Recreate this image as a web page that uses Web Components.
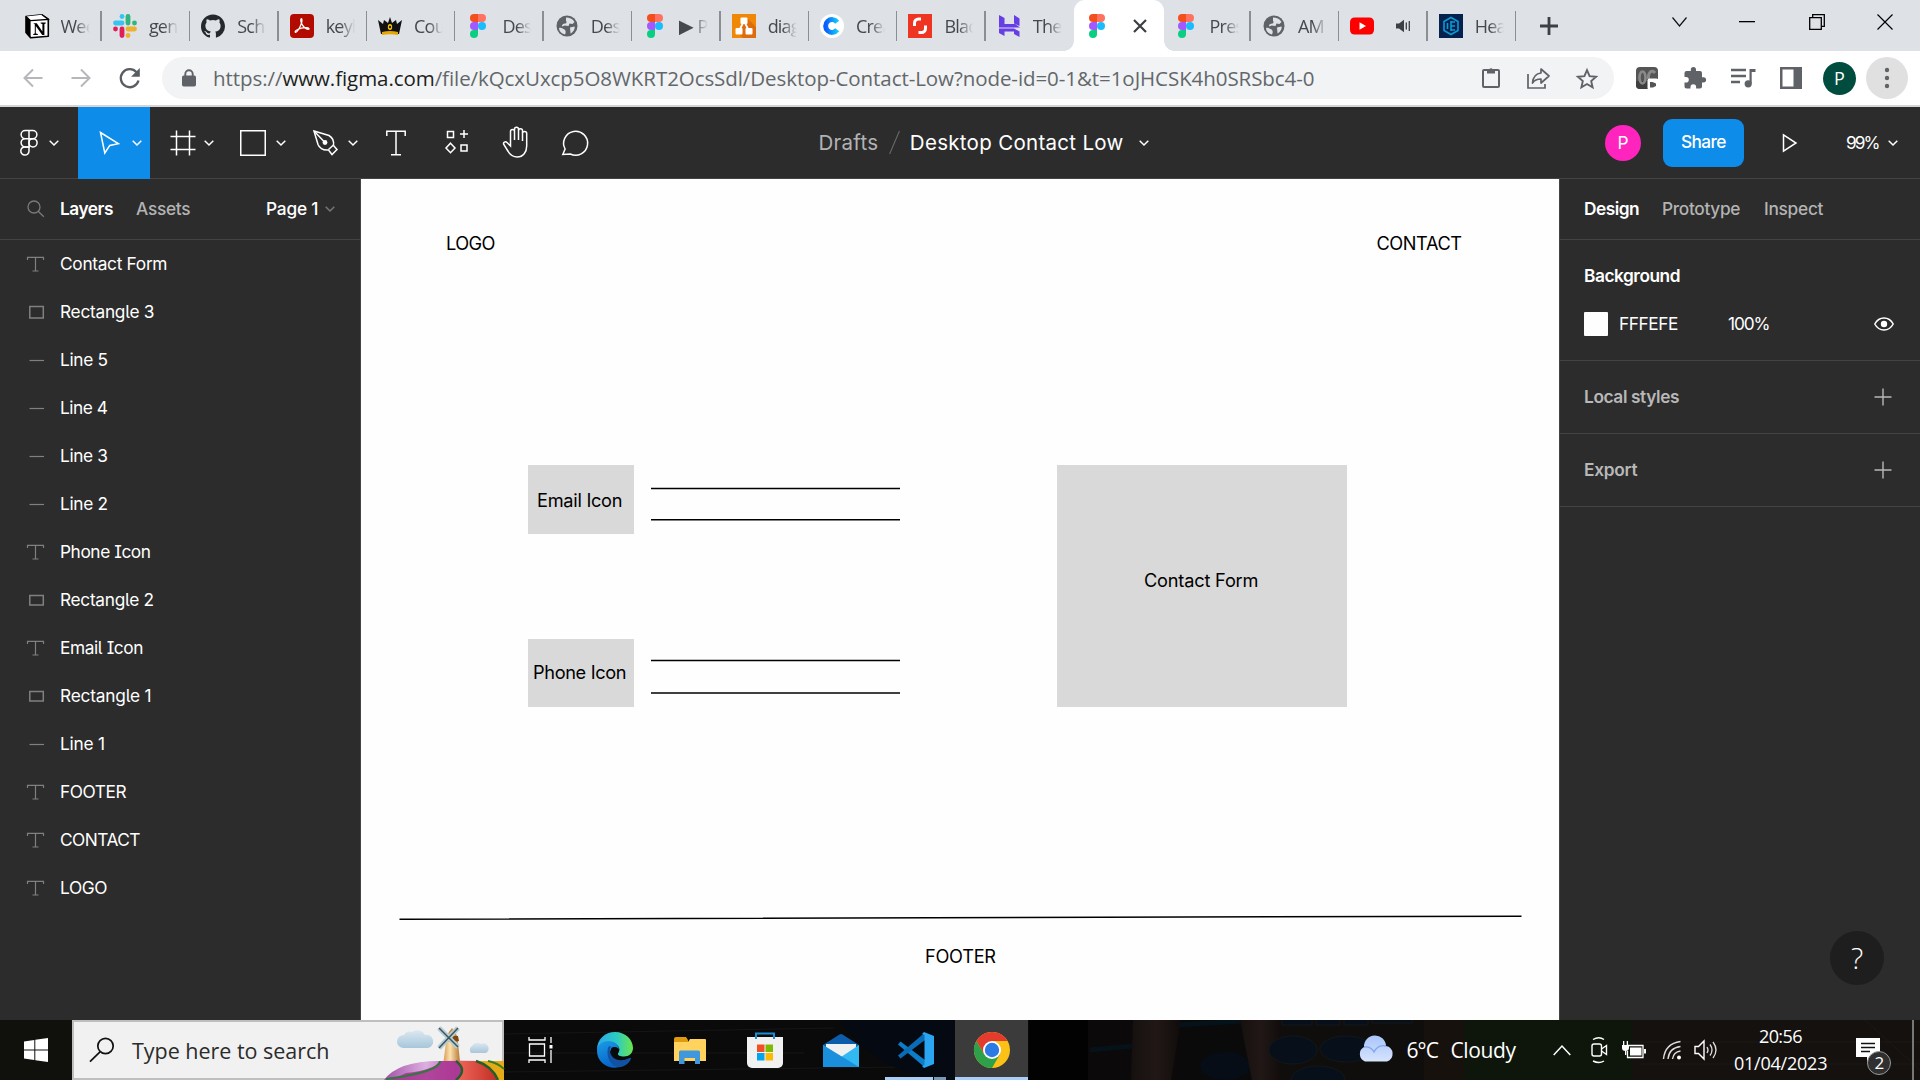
<!DOCTYPE html>
<html lang="en">
<head>
<meta charset="utf-8">
<title>Desktop Contact Low</title>
<style>
html,body{margin:0;height:100%;overflow:hidden;background:#2c2c2c}
</style>
</head>
<body>
<desk-top></desk-top>
<script>
const figmaColor = `<path d="M4 0h4v8H4a4 4 0 0 1 0-8z" fill="#f24e1e"/><path d="M8 0h4a4 4 0 0 1 0 8H8z" fill="#ff7262"/><path d="M4 8h4v8H4a4 4 0 0 1 0-8z" fill="#a259ff"/><circle cx="12" cy="12" r="4" fill="#1abcfe"/><path d="M4 16h4v4a4 4 0 1 1-4-4z" fill="#0acf83"/>`;
const ICONS = {
  notion:[24,24,`<path d="M1 2.500 17 .8l6.300 4.400v17L5.600 23.800 1 18.500z" fill="#fff" stroke="#000" stroke-width="1.600" stroke-linejoin="round"/><path d="M1 2.500l4.600 4.200 17.700-1.300L17 .8" stroke="#000" stroke-width="1.200" fill="#fff"/><path d="M1 2.500l4.600 4.200v17L1 18.500z" fill="#000"/><path d="M8.200 9.200h3.600l5.600 8.200V10l-1.700-.5v-.9h5v.9l-1.300.5v11h-2.200l-6.400-9v7.500l2 .5v1H8.300v-1l1.500-.5V10.200z" fill="#000"/>`],
  slack:[24,24,`<g stroke-width="4.800" stroke-linecap="round"><path d="M9 2.500h0" stroke="#36c5f0"/><path d="M2.500 9H9" stroke="#36c5f0"/><path d="M15 2.500V9" stroke="#2eb67d"/><path d="M21.500 9h0" stroke="#2eb67d"/><path d="M15 15h6.500" stroke="#ecb22e"/><path d="M15 21.500h0" stroke="#ecb22e"/><path d="M9 15v6.500" stroke="#e01e5a"/><path d="M2.500 15h0" stroke="#e01e5a"/></g>`],
  github:[24,24,`<path d="M12 .5C5.400.5 0 5.800 0 12.400c0 5.200 3.400 9.600 8.200 11.200.6.1.8-.3.8-.6v-2.200c-3.300.7-4-1.400-4-1.400-.5-1.400-1.300-1.800-1.300-1.800-1.100-.7.1-.7.1-.7 1.200.1 1.800 1.200 1.800 1.200 1.100 1.800 2.800 1.300 3.500 1 .1-.8.4-1.300.8-1.600-2.700-.3-5.500-1.300-5.500-5.900 0-1.300.5-2.400 1.200-3.200-.1-.3-.5-1.500.1-3.200 0 0 1-.3 3.300 1.200a11.500 11.500 0 0 1 6 0C17.300 5 18.300 5.300 18.300 5.300c.6 1.700.2 2.900.1 3.200.8.800 1.200 1.900 1.200 3.200 0 4.600-2.800 5.600-5.500 5.900.4.4.8 1.100.8 2.200V23c0 .3.2.7.8.6A12 12 0 0 0 24 12.400C24 5.800 18.600.5 12 .5z" fill="#24292f"/>`],
  acrobat:[24,24,`<rect width="24" height="24" rx="4" fill="#b30b00"/><path d="M5.500 18.300c1.500.5 5-5.500 6.100-9.600.5-2 .5-4-.2-4s-1 2 .2 4.700c1.300 3 4.300 6 6.500 6 1.700 0 1-1.600-1.500-1.700-3.500-.2-7 .8-9.400 2.100-1.600.9-2.500 2.100-1.700 2.500z" fill="none" stroke="#fff" stroke-width="1.300"/>`],
  crown:[24,24,`<path d="M0 6l5 4 1-4 4 3 2-6 2 6 4-3 1 4 5-4-3 14H3z" fill="#111"/><path d="M4 18q8-2 16 0v3q-8-1.500-16 0z" fill="#e6a800"/><ellipse cx="12" cy="13" rx="2.200" ry="3" fill="#ffc400"/><circle cx="12" cy="13" r="1.200" fill="#222"/>`],
  figma:[16,24,figmaColor],
  globe:[22,22,`<circle cx="11" cy="11" r="10.500" fill="#5f6368"/><path d="M3 13c2-1 4 .5 5.500 1.500S10 18 9 19.500C5 18.500 3 16 3 13zM10 2.500c3.500 0 6.500 1 8.500 4.500l-2 2-3-.5-1 2.500-4-.5-2 1C5 10 7.500 8.500 9.500 8.500c1 0 1.500-2 .5-2.500zM14 12.500l4.500-1c1 2-1.500 6-4 7 0-2-.5-4-.5-6z" fill="#dee1e6"/>`],
  diagrams:[24,24,`<path d="M0 0h24v24H0z" fill="#f08705"/><path d="M15 4l9 9v11H11l-6-6z" fill="#df6c0c"/><path d="M12 7L7 17M12 7l5 10" stroke="#fff" stroke-width="1.800"/><rect x="8.500" y="3.500" width="7" height="6.500" rx="1" fill="#fff"/><rect x="3.500" y="14" width="7" height="6.500" rx="1" fill="#fff"/><rect x="13.500" y="14" width="7" height="6.500" rx="1" fill="#fff"/>`],
  cre:[24,24,`<circle cx="12" cy="12" r="12" fill="#fff"/><path d="M17.200 8.200A6.400 6.400 0 1 0 17.200 15.800" fill="none" stroke="url(#cg)" stroke-width="5"/><defs><linearGradient id="cg"><stop stop-color="#0a5cff"/><stop offset="1" stop-color="#12c8f4"/></linearGradient></defs>`],
  black:[24,24,`<path d="M0 0h24v24H0z" fill="#ee3524"/><path d="M6.500 12V9a4 4 0 0 1 4-4H13M17.500 11.500v3a4 4 0 0 1-4 4H10.500" fill="none" stroke="#fff" stroke-width="3"/>`],
  hostinger:[22,24,`<path d="M1 1l5.500 3v6H17l5 3.500H1zM16 1l5.500 3.500V12L16 9.500zM1 14.500h15l5.500 3V23L16 20v-2.500H6.500V22L1 19z" fill="#673de6"/>`],
  x:[14,14,`<path d="M1 1l12 12M13 1L1 13" stroke="#3c4043" stroke-width="2.200"/>`],
  youtube:[24,18,`<rect width="24" height="17" y=".5" rx="4.500" fill="#f00"/><path d="M9.500 5.200v7.600L16 9z" fill="#fff"/>`],
  sound:[15,14,`<path d="M0 4.500h3L8 .8v12.400L3 9.500H0z" fill="#3c4043"/><path d="M10.300 3.500v7M13.300 2v10" stroke="#3c4043" stroke-width="1.300"/>`],
  health:[24,24,`<path d="M0 0h24v24H0z" fill="#05224f"/><path d="M12 3.500l7 4v9l-7 4-7-4v-9zM12 7v10M12.500 8H16M12.500 12H16M12.500 16H16M8.500 9v6" fill="none" stroke="#0a9ad4" stroke-width="1.600"/>`],
  plusTab:[18,18,`<path d="M9 0v18M0 9h18" stroke="#3c4043" stroke-width="2.800"/>`],
  winDown:[15,10,`<path d="M.5.500l7 8.500 7-8.500" fill="none" stroke="#111" stroke-width="1.200"/>`],
  winMin:[16,2,`<path d="M0 0h16v1.300H0z" fill="#000"/>`],
  winMax:[16,16,`<path d="M.7 3.700h11.600v11.600H.7zM3.700 3.500V.7h11.600v11.600H12.500" fill="none" stroke="#000" stroke-width="1.300"/>`],
  winClose:[16,16,`<path d="M.5.500l15 15M15.500.500l-15 15" stroke="#000" stroke-width="1.200"/>`],
  back:[20,20,`<path d="M19.500 10H2M10 1.500L1.500 10l8.500 8.500" fill="none" stroke="#b5b7ba" stroke-width="2"/>`],
  fwd:[20,20,`<path d="M.5 10H18M10 1.500l8.500 8.500-8.500 8.500" fill="none" stroke="#b5b7ba" stroke-width="2"/>`],
  reload:[22,22,`<path d="M17.500 5.200a9 9 0 1 0 2 8.300" fill="none" stroke="#5a5e63" stroke-width="2.300"/><path d="M20.800 1v8.700h-8.700z" fill="#5a5e63"/>`],
  lock:[14,18,`<path d="M3.300 8V5a3.700 3.700 0 0 1 7.400 0v3" fill="none" stroke="#5f6368" stroke-width="1.900"/><rect y="6.500" width="14" height="11" rx="1.700" fill="#5f6368"/>`],
  clip:[18,22,`<rect x="1" y="3" width="16" height="17" rx="1" fill="none" stroke="#5f6368" stroke-width="2"/><path d="M5 2.500h2.300a1.800 1.800 0 0 1 3.400 0H13v4H5z" fill="#5f6368"/>`],
  share:[24,22,`<path d="M1 7v14h17v-4" fill="none" stroke="#5f6368" stroke-width="1.700"/><path d="M14 2l8 7-8 7v-4c-4 0-6.500 1-8.500 4C6 10.500 9 6.500 14 6z" fill="none" stroke="#5f6368" stroke-width="1.700" stroke-linejoin="round"/>`],
  star:[22,21,`<path d="M11 2.200l2.600 6 6.500.6-4.900 4.300 1.400 6.300L11 16l-5.600 3.400 1.400-6.300L1.900 8.800l6.500-.6z" fill="none" stroke="#5f6368" stroke-width="1.900"/>`],
  ext:[23,23,`<rect x="0" y="0" width="22" height="22" rx="4" fill="#555"/><path d="M0 14h22v4a4 4 0 0 1-4 4H4a4 4 0 0 1-4-4z" fill="#3f3f3f"/><ellipse cx="6.500" cy="10.500" rx="3" ry="6" fill="none" stroke="#8a8a8a" stroke-width="2.600"/><path d="M19 6c-3-4-7-1-6.500 6" fill="none" stroke="#8a8a8a" stroke-width="3"/><rect x="11.500" y="11.500" width="11" height="11.500" rx="2" fill="#fff"/><path d="M14 15h2.500l3.500 1.500V19l-3 1.500h-3z" fill="#555"/>`],
  puzzle:[22,22,`<path d="M19.500 10.200H18V6a2 2 0 0 0-2-2h-4V2.600a2.600 2.600 0 0 0-5.200 0V4H2.500a2 2 0 0 0-2 2v3.900H2a2.800 2.800 0 0 1 0 5.600H.5v4a2 2 0 0 0 2 2h4V20a2.800 2.800 0 0 1 5.600 0v1.500H16a2 2 0 0 0 2-2v-4.100h1.500a2.600 2.600 0 0 0 0-5.200z" fill="#5f6368"/>`],
  queue:[25,20,`<path d="M0 2h15M0 8h15M0 14h9" stroke="#5f6368" stroke-width="2.400"/><path d="M18.500 15V1h6v3h-3.800v11.500" fill="#5f6368"/><circle cx="17.200" cy="15.800" r="3.600" fill="#5f6368"/>`],
  side:[22,22,`<path d="M0 0h22v22H0zM2.500 2.500v17h11v-17z" fill="#5f6368" fill-rule="evenodd"/>`],
  dots:[6,22,`<circle cx="3" cy="3" r="2.200" fill="#5f6368"/><circle cx="3" cy="11" r="2.200" fill="#5f6368"/><circle cx="3" cy="19" r="2.200" fill="#5f6368"/>`],
  caret:[10,8,`<path d="M.7 1.700L5 6l4.300-4.300" fill="none" stroke="currentColor" stroke-width="1.500"/>`],
  figmaLine:[18,28,`<g fill="none" stroke="#fff" stroke-width="1.500" transform="translate(0 .5)"><path d="M9 1H5.200a4.100 4.100 0 0 0 0 8.200H9zM9 1h3.800a4.100 4.100 0 0 1 0 8.200H9zM9 9.200H5.200a4.100 4.100 0 0 0 0 8.200H9z"/><circle cx="13" cy="13.300" r="4.100"/><path d="M9 17.400H5.200A4.100 4.100 0 1 0 9 21.500z"/></g>`],
  cursor:[21,24,`<path d="M1.500 1.500l17.800 11.200-8.500 1.700L5.800 22z" fill="none" stroke="#fff" stroke-width="1.500"/>`],
  frame:[26,26,`<path d="M6.500.500v25M19.500.500v25M.5 6.500h25M.5 19.500h25" stroke="#fff" stroke-width="1.500"/>`],
  square:[26,26,`<rect x=".75" y=".75" width="24.500" height="24.500" fill="none" stroke="#fff" stroke-width="1.500"/>`],
  pen:[26,26,`<g fill="none" stroke="#fff" stroke-width="1.500"><path d="M1 1l15 4.500c3.500 2 5 6 4.500 10l3.500 4-5 5-3.500-4.500C10 20.500 6.500 18 5 14.500z"/><path d="M1.500 1.500l9.500 10"/><path d="M15.500 19.500l5-4.500"/></g><circle cx="12" cy="12.500" r="2.400" fill="#fff"/>`],
  text:[20,26,`<path d="M.8 6V1.300h18.400V6M10 1.300v23.400M5 24.700h10" fill="none" stroke="#fff" stroke-width="1.500"/>`],
  res:[24,28,`<g fill="none" stroke="#fff" stroke-width="1.500"><path d="M2.500 2.500h6v6h-6zM16 16h6v6h-6zM19 1v8M15 5h8"/><path d="M5.500 14.200L10 19l-4.500 4.700L1 19z"/></g>`],
  hand:[28,34,`<path d="M8.500 17V5.500a2 2 0 0 1 4 0V14M12.500 13V3.200a2 2 0 0 1 4 0V14M16.500 13V4.800a2 2 0 0 1 4 0V15M20.500 13V7.500a2.100 2.100 0 0 1 4.200 0V20c0 6-3.500 11-9.500 11-4.500 0-7-2-9-5.500L1.800 18.500c-1-2 1.600-3.500 3.200-2L8.500 20v-4" fill="none" stroke="#fff" stroke-width="1.500"/>`],
  comment:[28,31,`<path d="M1.500 26l2.300-5.500A12 12 0 1 1 9 25.500z" transform="translate(.3 .5)" fill="none" stroke="#fff" stroke-width="1.500"/>`],
  play:[16,20,`<path d="M1.500 1.800v16.400L14 10z" fill="none" stroke="#fff" stroke-width="1.500"/>`],
  find:[18,18,`<circle cx="7" cy="7" r="6" fill="none" stroke="#7a7a7a" stroke-width="1.300"/><path d="M11.200 11.200l5.600 5.600" stroke="#7a7a7a" stroke-width="1.300"/>`],
  lT:[18,16,`<path d="M.5 4V1.300h16V4M8.500 1v14M5.500 15h6" fill="none" stroke="#808080" stroke-width="1.200"/>`],
  lR3:[18,16,`<rect x="2.800" y="2.500" width="13.500" height="11.500" fill="none" stroke="#808080" stroke-width="1.500"/>`],
  lR:[18,16,`<rect x="2.800" y="3.500" width="13.500" height="9.500" fill="none" stroke="#808080" stroke-width="1.500"/>`],
  lL:[18,16,`<path d="M2.500 8.500h14.500" stroke="#808080" stroke-width="1.200"/>`],
  eye:[20,14,`<path d="M.8 7C3 2.900 6.500 1 10 1s7 1.900 9.200 6C17 11.100 13.500 13 10 13S3 11.100.8 7z" fill="none" stroke="#fff" stroke-width="1.500"/><circle cx="10" cy="7" r="3.200" fill="#fff"/>`],
  plus:[18,18,`<path d="M9 .5v17M.5 9h17" stroke="#b8b8b8" stroke-width="1.400"/>`],
  windows:[24,24,`<path d="M0 3.500L10.300 2v9.500H0zM11.300 1.800L24 0v11.500H11.300zM0 12.500h10.300V22L0 20.600zM11.300 12.500H24V24l-12.700-1.800z" fill="#fff"/>`],
  search:[26,26,`<circle cx="16.500" cy="9" r="7.700" fill="none" stroke="#111" stroke-width="1.700"/><path d="M11 14.800L1 24.700" stroke="#111" stroke-width="1.700"/>`],
  mill:[120,60,`<defs><linearGradient id="cl" x2="0" y2="1"><stop stop-color="#dbe8f1"/><stop offset="1" stop-color="#a8c6da"/></linearGradient><linearGradient id="tw"><stop stop-color="#d99a50"/><stop offset=".4" stop-color="#fbe2b0"/><stop offset="1" stop-color="#b87834"/></linearGradient><linearGradient id="pu"><stop stop-color="#a44fa8"/><stop offset=".35" stop-color="#dcb0e0"/><stop offset=".6" stop-color="#b95fb4"/></linearGradient><linearGradient id="rd"><stop stop-color="#f2685c"/><stop offset="1" stop-color="#b9251b"/></linearGradient></defs>
    <path d="M19 28a6.500 6.500 0 0 1 1-13 7 7 0 0 1 8-3 9 9 0 0 1 13 3 6.500 6.500 0 0 1 3 13z" fill="url(#cl)"/><path d="M87 33a4.500 4.500 0 0 1 1-7 6 6 0 0 1 9-2 4.800 4.800 0 0 1 5 9z" fill="url(#cl)"/>
    <path d="M59.500 42l2.500-20 3-4h6l3 4 2 20z" fill="url(#tw)"/><path d="M63 17q1-5 5-9 5 7 6 10v4H63z" fill="#c98a3c"/><path d="M66 16h8l1 5-6 1z" fill="#80480f"/><path d="M55 8l19 19M74 8L55 28" stroke="#b8cdd2" stroke-width="5"/><path d="M55 8l19 19M74 8L55 28" stroke="#3a5560" stroke-width="1.500"/>
    <path d="M0 60Q14 41 55 41q34-1 65 1v18z" fill="url(#pu)"/><path d="M22 53q28-3 34-12h17q8 9 1 19H5q10-3 17-7z" fill="#a9328f" opacity=".85"/><path d="M2 59q54-7 54-18" fill="none" stroke="#2c7a3e" stroke-width="2.200"/><path d="M72 41q10 8 0 19h48V41z" fill="url(#rd)"/><path d="M92 41q17 5 22 19h6V41z" fill="#e7aa16"/><path d="M72 41q12 9 0 19M92 41q16 5 22 19" fill="none" stroke="#245f2b" stroke-width="2.500"/><path d="M104 41q10 2 16 8" stroke="#3b7d25" stroke-width="2" fill="none"/>`],
  task:[26,26,`<path d="M1 0v3h16V0M1 26v-3h16v3M1.500 7h15v12h-15zM23 0v6M23 13v13" fill="none" stroke="#fff" stroke-width="1.300"/><path d="M21.500 8h3v3.500h-3z" fill="#fff"/>`],
  edge:[36,36,`<defs><linearGradient id="e1"><stop stop-color="#2ba9ea"/><stop offset=".55" stop-color="#2ccbc4"/><stop offset="1" stop-color="#6ce64a"/></linearGradient><linearGradient id="e2" x2=".4" y2="1"><stop stop-color="#1b9de8"/><stop offset="1" stop-color="#0864c8"/></linearGradient></defs><path d="M0 18C0 7 8 0 18 0c11 0 18 8 18 16 0 5-4 8.500-9 8.500-4 0-6.500-1.300-6-3 3-4 1-9-4-9C9 12.500 2 14 0 18z" fill="url(#e1)"/><path d="M0 18c1-6 6-9 11.500-9C18 9 22 13 22 17c-3-3-8-2-9 3-1 7 4 16 12 14.300C14 39-.5 32 0 18z" fill="url(#e2)"/><path d="M11.500 14.500C8 24 14 36 24 35c5-1 9-5 10-8.500.2-1-1-1-2-.3-8 4-17 2-19-6.200-.4-2 0-4 1.500-5.500z" fill="#1152a2"/><path d="M14 17c1.500-3 6.500-2.500 7.300 1 .4 2-.8 3-.8 4.500-3 1.500-6-1-6.500-5.500z" fill="#07090d"/>`],
  folder:[32,27,`<path d="M0 2a2 2 0 0 1 2-2h10l2 3v3H0z" fill="#e09a10"/><path d="M0 5h14l2-3h15a1 1 0 0 1 1 1v21H0z" fill="#ffd35e"/><path d="M5 27V15a1.500 1.500 0 0 1 1.500-1.500h18A1.500 1.500 0 0 1 26 15v12h-5v-6H10.500v6z" fill="#3f98dc"/>`],
  store:[36,36,`<path d="M9 8V1.500h18V8" fill="none" stroke="#1c8fd2" stroke-width="2"/><path d="M0 5h36v26a5 5 0 0 1-5 5H5a5 5 0 0 1-5-5z" fill="#f1f1f1"/><path d="M9 5v2M27 5v2" fill="none" stroke="#1c8fd2" stroke-width="2"/><path d="M10 12.500h7.500V20H10z" fill="#f25022"/><path d="M18.500 12.500H26V20h-7.500z" fill="#7fba00"/><path d="M10 21h7.500v7.500H10z" fill="#00a4ef"/><path d="M18.500 21H26v7.500h-7.500z" fill="#ffb900"/>`],
  mail:[36,33,`<path d="M0 11L16.500.5q1.500-1 3 0L36 11v6H0z" fill="#0d5cab"/><path d="M3 10h30v13H3z" fill="#eef0f2"/><path d="M0 11l18 12L36 11v22H0z" fill="#32b9f2"/><path d="M0 11l36 22H0z" fill="#1a90dd"/>`],
  code:[36,36,`<path d="M0 12.500l2.500-3L27 28v7.500z" fill="#0c7dc8"/><path d="M0 23.500l2.500 3L27 8V.5z" fill="#0a6cb6"/><path d="M26 0l10 4v28l-10 4-2-2 2.500-1V3L24 2z" fill="#2aa5f2"/>`],
  chrome:[36,36,`<circle cx="18" cy="18" r="18" fill="#fbc116"/><path d="M18 9h15.600A18 18 0 0 0 2.400 9l7.800 13.500z" fill="#e33b2e"/><path d="M2.400 9A18 18 0 0 0 18 36l7.800-13.500L10.200 22.500z" fill="#2da04a"/><circle cx="18" cy="18" r="9" fill="#fff"/><circle cx="18" cy="18" r="7.200" fill="#2c7be5"/>`],
  cloud:[38,24,`<defs><linearGradient id="wc" x2="0" y2="1"><stop stop-color="#a9c5fb"/><stop offset="1" stop-color="#d6e4fd"/></linearGradient></defs><path d="M8 23.500A8 8 0 0 1 7 9a11 11 0 0 1 22-1 8 8 0 0 1 1 15.500z" fill="url(#wc)"/><path d="M7 9q7-1 10 5 4-8 12-6" fill="none" stroke="#7fa5ee" stroke-width="1.300"/>`],
  up:[18,11,`<path d="M.7 10L9 1l8.300 9" fill="none" stroke="#fff" stroke-width="1.500"/>`],
  meet:[18,26,`<g fill="none" stroke="#fff" stroke-width="1.400"><rect x="2" y="7" width="9.500" height="12" rx="2"/><path d="M11.500 12l5-3.500v9l-5-3.500M3 2.500q6-3.500 11 0M3 24q6 3 11 0"/></g>`],
  battery:[24,18,`<path d="M6 4.500h15v12H5.500V10" fill="none" stroke="#fff" stroke-width="1.300"/><path d="M8 6.500h11.500v8H8zM22 8h2v4.500h-2zM0 4h7v3q0 3-3.500 3T0 7zM1 0h1.300v4H1zM4.700 0H6v4H4.700zM3 10h1.300v4H3z" fill="#fff"/>`],
  wifi:[20,20,`<g fill="none" stroke="#ddd" stroke-width="1.400"><path d="M1.500 19Q3 3.500 18.500 1.500M6 19Q7 8 18.500 6.500M10.500 19q1-7 8-8"/></g><circle cx="17" cy="17.500" r="2" fill="#fff"/>`],
  volume:[23,20,`<path d="M1 6.500h3.500L10 1v18l-5.500-5.500H1z" fill="none" stroke="#fff" stroke-width="1.400"/><path d="M13 7q2 3 0 6M16 4.500q4 5.500 0 11M19 2q6 8 0 16" fill="none" stroke="#ddd" stroke-width="1.300"/>`],
  note:[24,25,`<path d="M0 0h24v19h-8l-5 5.500V19H0z" fill="#fff"/><path d="M5 5.500h14M5 9.500h14M5 13.500h9" stroke="#111" stroke-width="1.300"/>`]
};

function define(tag, html, setup){
  customElements.define(tag, class extends HTMLElement{
    connectedCallback(){
      if(this.shadowRoot) return;
      const root=this.attachShadow({mode:'open'});
      const t=document.createElement('template');
      t.innerHTML=typeof html==='function'?html(this):html;
      root.append(t.content.cloneNode(true));
      if(setup) setup(this,root);
    }
  });
}
const icon=(n,style='')=>`<ui-icon name="${n}" style="${style}"></ui-icon>`;
const fit=(w,t,style='')=>`<fit-text w="${w}" style="${style}">${t}</fit-text>`;

/* Root: browser tabs, address bar, editor, taskbar */
define('desk-top',`<style>:host{display:flex;flex-direction:column;width:1920px;height:1080px;overflow:hidden}</style>
<tab-strip></tab-strip><address-bar></address-bar><editor-toolbar></editor-toolbar><editor-body></editor-body><task-bar></task-bar>`);

define('tab-strip',()=>{
  const tabs=[['notion','Weekly'],['slack','general'],['github','School'],['acrobat','keyboard'],['crown','Courses'],['figma','Design'],['globe','Design'],['figma','<b>▶</b> Portfolio'],['diagrams','diagram'],['cre','Create'],['black','Black'],['hostinger','The best'],['figma',null],['figma','Present'],['globe','AM I'],['youtube','@'],['health','Health']];
  return `<style>:host{display:flex;height:51px;flex:none;background:#dee1e6;padding-left:13.500px;align-items:center}</style>`+
  tabs.map(([i,t])=>`<browser-tab icon="${i}" ${t===null?'active':''} ${t==='@'?'audio':''}>${t&&t!='@'?t:''}</browser-tab>`).join('')+
  icon('plusTab','margin-left:23.500px')+icon('winDown','margin:-8px 0 0 114px')+icon('winMin','margin:-8px 0 0 52px')+icon('winMax','margin:-8px 0 0 54px')+icon('winClose','margin:-8px 0 0 52px');
});
define('browser-tab',el=>`<style>
:host{display:flex;box-sizing:border-box;width:88.400px;height:51px;align-items:center;flex:none;font:18px/26px "Open Sans","Noto Sans",sans-serif;color:#45484c;position:relative}
.i{width:24px;margin-left:11px;display:flex;justify-content:center;flex:none}
.t{width:29px;height:26px;margin-left:12px;overflow:hidden;white-space:nowrap;letter-spacing:-.8px;-webkit-mask-image:linear-gradient(90deg,#000 50%,transparent);mask-image:linear-gradient(90deg,#000 50%,transparent)}
.sep{width:1.500px;height:30px;background:#8b8e92;margin-left:auto}
:host([active]){background:#fff;border-radius:11px 11px 0 0;width:90px;margin-right:-1.600px}
:host([active])::before,:host([active])::after{content:"";position:absolute;bottom:0;width:10px;height:10px}
:host([active])::before{left:-10px;background:radial-gradient(circle at 0 0,transparent 9.500px,#fff 10px)}
:host([active])::after{right:-10px;background:radial-gradient(circle at 100% 0,transparent 9.500px,#fff 10px)}
::slotted(b){font-family:"DejaVu Sans";font-size:20px;line-height:20px;letter-spacing:0;font-weight:400;margin-left:-1px}
</style><span class="i">${icon(el.getAttribute('icon'))}</span>`+
(el.hasAttribute('active')?icon('x','margin-left:23.500px'):el.hasAttribute('audio')?icon('sound','margin-left:22px')+'<span class="sep"></span>':`<span class="t"><slot></slot></span>${el.getAttribute('icon')==='hostinger'?'':'<span class="sep"></span>'}`));

define('address-bar',`<style>
:host{display:flex;box-sizing:border-box;height:56px;flex:none;background:#fff;border-bottom:2px solid #d4d5d6;align-items:center;padding-left:23px;font:20.500px/28px "Open Sans","Noto Sans",sans-serif;color:#63676b}
.url{display:flex;align-items:center;width:1452px;height:42px;border-radius:21px;background:#f1f3f4;margin-left:21px;flex:none}
b{font-weight:400;color:#1d1e20}
.p{width:33px;height:33px;border-radius:50%;background:#004d40;color:#fff;font-size:18px;text-align:center;line-height:33px;margin-left:21px}
.m{width:42px;height:42px;border-radius:50%;background:#e0e0e1;display:flex;align-items:center;justify-content:center;margin-left:10px}
</style>${icon('back')}${icon('fwd','margin-left:28px')}${icon('reload','margin-left:28px')}
<div class="url">${icon('lock','margin-left:20px')}${fit(1103,'https://<b>www.figma.com</b>/file/kQcxUxcp5O8WKRT2OcsSdl/Desktop-Contact-Low?node-id=0-1&amp;t=1oJHCSK4h0SRSbc4-0','margin-left:16px')}${icon('clip','margin-left:167px')}${icon('share','margin-left:27px')}${icon('star','margin-left:25px')}</div>
${icon('ext','margin-left:22px')}${icon('puzzle','margin-left:25px')}${icon('queue','margin-left:25px')}${icon('side','margin-left:24px')}<div class="p">P</div><div class="m">${icon('dots')}</div>`);

define('tool-button',el=>{const g=a=>el.getAttribute(a);return `<style>:host{display:flex;align-items:center;box-sizing:border-box;height:72px;flex:none;color:#fff;width:${g('w')}px;padding-left:${g('pad')}px}:host([on]){background:#0d8ce9}</style>${icon(g('icon'))}${g('gap')?icon('caret',`margin-left:${g('gap')}px`):''}`});

define('editor-toolbar',`<style>
:host{display:flex;height:71px;flex:none;background:#2c2c2c;border-bottom:1px solid #444;color:#fff;font:17.300px/24px Inter,sans-serif}
.tools{display:flex;width:817.500px;height:72px}.title{display:flex;align-items:center;width:787.500px;font-size:20.500px}
.slash{width:1.300px;height:25px;background:#6b6b6b;transform:rotate(23deg);margin:0 14px 0 15px}
.r{display:flex;align-items:center}.p{width:36px;height:36px;border-radius:50%;background:#ff24bd;text-align:center;line-height:36px}
.s{display:flex;align-items:center;justify-content:center;box-sizing:border-box;width:81px;height:48px;border-radius:9px;background:#0d8ce9;margin-left:22px;font-weight:500;padding-bottom:1px}
</style><div class="tools">
<tool-button icon="figmaLine" w="78" pad="20" gap="11"></tool-button><tool-button on icon="cursor" w="72" pad="21" gap="12"></tool-button><tool-button icon="frame" w="72" pad="20" gap="8"></tool-button><tool-button icon="square" w="72" pad="18" gap="10"></tool-button><tool-button icon="pen" w="72" pad="19" gap="9"></tool-button><tool-button icon="text" w="61" pad="20"></tool-button><tool-button icon="res" w="60" pad="18"></tool-button><tool-button icon="hand" w="59" pad="15"></tool-button><tool-button icon="comment" w="60" pad="15"></tool-button></div>
<div class="title">${fit(61,'Drafts','color:#b3b3b3')}<span class="slash"></span>${fit(215,'Desktop Contact Low')}${icon('caret','margin-left:15.500px')}</div>
<div class="r"><div class="p">P</div><div class="s">${fit(47,'Share')}</div>${icon('play','margin-left:38px')}${fit(36,'99%','margin-left:47px')}${icon('caret','margin-left:7px')}</div>`);

define('editor-body',`<style>:host{display:flex;flex:1;min-height:0;font:17.300px/24px Inter,sans-serif;color:#fff}</style><layers-panel></layers-panel><design-canvas></design-canvas><design-panel></design-panel>`);

define('layer-row',el=>`<style>:host{display:flex;align-items:center;height:48px;padding-left:27px;font-feature-settings:"cv05","cv08"}</style>${icon(el.getAttribute('icon'))}${fit(el.getAttribute('w'),el.getAttribute('label'),'margin-left:14px')}`);
define('layers-panel',`<style>
:host{display:block;width:360px;flex:none;background:#2c2c2c;border-right:1px solid #444}
.h{display:flex;align-items:center;height:60px;border-bottom:1px solid #444;padding-left:27px}
</style><div class="h">${icon('find')}${fit(55,'Layers','margin-left:14px;font-weight:600')}${fit(56,'Assets','margin-left:21px;font-weight:500;color:#b3b3b3')}${fit(54,'Page 1','margin-left:74px;font-weight:500')}${icon('caret','margin-left:6px;color:#777')}</div>`+
[['lT','Contact Form',109],['lR3','Rectangle 3',96],['lL','Line 5',49.5],['lL','Line 4',49.5],['lL','Line 3',49.5],['lL','Line 2',49.5],['lT','Phone Icon',92.5],['lR','Rectangle 2',95.5],['lT','Email Icon',85],['lR','Rectangle 1',93],['lL','Line 1',46.5],['lT','FOOTER',68],['lT','CONTACT',82],['lT','LOGO',49]].map(([i,t,w])=>`<layer-row icon="${i}" label="${t}" w="${w}"></layer-row>`).join(''));

/* Free canvas: coordinates are relative to the artboard's corner */
define('design-canvas',`<style>
:host{display:block;position:relative;width:1198px;flex:none;background:#fffefe;color:#000;overflow:hidden;font:18.200px/26px Inter,sans-serif}
fit-text,.box{position:absolute}.box{background:#d9d9d9}svg{position:absolute;inset:0}
</style>
<div class="box" style="left:167px;top:286px;width:105.500px;height:68.500px"></div>
<div class="box" style="left:167px;top:459.500px;width:105.500px;height:68px"></div>
<div class="box" style="left:696px;top:286px;width:290px;height:241.500px"></div>
<svg width="1198" height="841"><path d="M290 309.500h249M290 340.700h249M290 481.500h249M290 514h249M38.500 740.200L1160.500 737.200" stroke="#000" stroke-width="1.500"/></svg>`+
[['LOGO',84,51,51],['CONTACT',1014.5,87,51],['Email Icon',175,87,308],['Phone Icon',171,95,480],['Contact Form',782,116,388],['FOOTER',563,72.500,764]].map(([t,x,w,y])=>fit(w,t,`left:${x}px;top:${y}px`)).join(''));

define('panel-row',`<style>:host{display:flex;box-sizing:border-box;align-items:center;height:73px;padding:0 28px 0 23px;border-bottom:1px solid #444;justify-content:space-between;color:#b8b8b8;font-weight:600}</style><slot></slot>${icon('plus')}`);
define('design-panel',`<style>
:host{display:block;position:relative;box-sizing:border-box;flex:1;background:#2c2c2c;border-left:1px solid #444}
.h,.row{display:flex;align-items:center}.h{height:60px;border-bottom:1px solid #444;padding-left:23px;font-weight:500;color:#b3b3b3}
.bg{box-sizing:border-box;height:121px;border-bottom:1px solid #444;padding:24px 25px 0 23px}
.row{height:48px;margin-top:12px}.sw{width:24px;height:24px;background:#fffefe;border-radius:1px;margin-left:1px}
.q{position:absolute;right:36px;bottom:35px;width:54px;height:54px;border-radius:50%;background:#1e1e1e;text-align:center;font:300 29px/54px "Open Sans",sans-serif}
</style><div class="h">${fit(57,'Design','color:#fff;font-weight:600')}${fit(80,'Prototype','margin-left:21px')}${fit(61,'Inspect','margin-left:22px')}</div>
<div class="bg">${fit(98,'Background','font-weight:600')}<div class="row"><span class="sw"></span>${fit(61,'FFFEFE','margin-left:10px')}${fit(44,'100%','margin-left:48px')}${icon('eye','margin-left:auto;margin-right:1px')}</div></div>
<panel-row>${fit(97,'Local styles')}</panel-row><panel-row>${fit(55,'Export')}</panel-row><div class="q">?</div>`);

define('task-app',el=>`<style>:host{display:flex;align-items:center;justify-content:center;height:60px;width:75.200px;flex:none;box-sizing:border-box}:host([on]){background:#3b3b3b;border-bottom:3px solid #a9cdf7;padding-top:3px;width:73px}:host([run]){background:linear-gradient(#a9cdf7,#a9cdf7) 7px 100%/48px 3px no-repeat,linear-gradient(#7c98b8,#7c98b8) 56px 100%/12px 3px no-repeat}</style>${icon(el.getAttribute('icon'))}`);
define('task-bar',`<style>
:host{display:flex;height:60px;flex:none;align-items:center;position:relative;isolation:isolate;color:#fff;font:18px/27px "Open Sans","Noto Sans",sans-serif;background:#0a0a0a}
.bg{position:absolute;inset:0;z-index:-1}.start{width:72px;display:flex;justify-content:center}
.search{display:flex;flex:none;box-sizing:border-box;width:432px;height:60px;background:linear-gradient(#f1f1f1,#f1f1f1) 2px 2px/428px 56px no-repeat #bfbfbf;align-items:center;padding-left:17px;font-size:21.500px;color:#2b2b2b}
.clock{display:flex;flex-direction:column;align-items:center;width:96px;margin-left:15px}
.n{position:relative;margin-left:28px;height:25px}.b{position:absolute;left:11px;top:13px;width:22px;height:22px;border:1px solid #999;border-radius:50%;background:#303030;text-align:center;line-height:22px;font-size:17px}
.end{width:2px;height:60px;background:#777;margin-left:auto;margin-right:6px}
</style>
<svg class="bg" width="1920" height="60"><defs><linearGradient id="sk"><stop stop-color="#15100f"/><stop offset=".5" stop-color="#211816"/><stop offset="1" stop-color="#100c0b"/></linearGradient></defs><path d="M0 0h72v60H0z" fill="#10100d"/><path d="M504 14l330-6M504 52l400-5M504 33h300" stroke="#161616"/><path d="M840 0q40 60 120 60h70V0z" fill="#050a12"/><path d="M1029 0h60v60h-60z" fill="#020202"/><path d="M1088 0h46v60h-46zM1180 0h-48v60h48z" fill="#0b0909"/><path d="M1133 0h48l-10 60h-40z" fill="url(#sk)"/><path d="M1180 5l60-4M1090 30l42-4" stroke="#06121a" stroke-width="5"/><ellipse cx="1225" cy="46" rx="25" ry="14" fill="#070d16"/><path d="M1240 0h42v60h-30z" fill="url(#sk)"/><path d="M1282 0h182v60h-182z" fill="#100e0c"/><g fill="#070f1a" stroke="#12181a"><path d="M1282 -4h30v9h-30zM1316 -4h24v9h-24zM1344 -4h24v9h-24zM1372 -4h40v7h-40z"/><ellipse cx="1293" cy="30" rx="24" ry="14"/><ellipse cx="1346" cy="29" rx="26" ry="13"/><ellipse cx="1318" cy="60" rx="27" ry="14"/></g><path d="M1424 0h41v60h-41z" fill="#17110e"/><path d="M1464 0h168v60h-168z" fill="#0e160b"/><path d="M1632 0h288v60h-288z" fill="#14110f"/><path d="M1632 22h288M1640 44h280M1865 0l55 50" stroke="#1d1917"/></svg>
<div class="start">${icon('windows')}</div>
<div class="search">${icon('search')}${fit(199,'Type here to search','margin-left:16px')}${icon('mill','margin-left:auto')}</div>
${icon('task','margin:0 24px 0 23.500px')}<task-app icon="edge"></task-app><task-app icon="folder"></task-app><task-app icon="store"></task-app><task-app icon="mail"></task-app><task-app icon="code" run></task-app><task-app icon="chrome" on style="margin-left:2px"></task-app>
${icon('cloud','margin-left:329px')}${fit(34,'6°C','margin-left:10px;font-size:21px')}${fit(67,'Cloudy','margin-left:10px;font-size:21px')}${icon('up','margin-left:37px')}${icon('meet','margin-left:19px')}${icon('battery','margin-left:14px')}${icon('wifi','margin-left:16px')}${icon('volume','margin-left:12px')}
<div class="clock">${fit(45,'20:56')}${fit(95,'01/04/2023')}</div><div class="n">${icon('note')}<span class="b">2</span></div><span class="end"></span>`);

define('ui-icon',el=>{const [w,h,s]=ICONS[el.getAttribute('name')];return `<style>:host{display:block;flex:none;width:${w}px;height:${h}px}svg{display:block;overflow:visible}</style><svg width="${w}" height="${h}" viewBox="0 0 ${w} ${h}" fill="none">${s}</svg>`});
/* Label that tracks its letters to fill the width given in "w" */
define('fit-text',`<style>:host{display:inline-block;flex:none;box-sizing:border-box;white-space:nowrap}</style><slot></slot>`,el=>{
  const w=+el.getAttribute('w'), nat=el.getBoundingClientRect().width, n=el.textContent.length;
  el.style.letterSpacing=((w-1.5-nat)/(n-1))+'px';
  el.style.paddingLeft='1px';
  el.style.width=w+'px';
});
</script>
</body>
</html>
